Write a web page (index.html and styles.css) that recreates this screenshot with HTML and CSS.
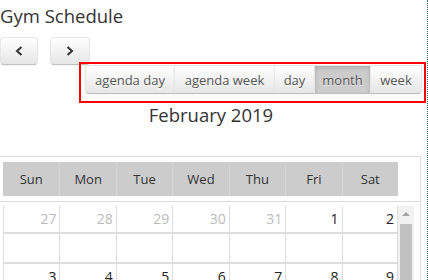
FILE: index.html
```html
<!DOCTYPE html>
<html>
<head>
    <meta charset="UTF-8">
    <title>Gym Schedule</title>
    <link rel="stylesheet" href="styles.css">
</head>
<body>
    <div class="page">
        <h1 class="title">Gym Schedule</h1>
        <div class="nav">
            <button class="btn nav-btn prev">
                <svg width="8" height="10" viewBox="0 0 8 10"><polyline points="6.5,1 2,5 6.5,9" fill="none" stroke="#333" stroke-width="2"/></svg>
            </button>
            <button class="btn nav-btn next">
                <svg width="8" height="10" viewBox="0 0 8 10"><polyline points="1.5,1 6,5 1.5,9" fill="none" stroke="#333" stroke-width="2"/></svg>
            </button>
        </div>
        <div class="views">
            <div class="btn-group">
                <button class="btn view-btn agenda-day">agenda day</button>
                <button class="btn view-btn agenda-week">agenda week</button>
                <button class="btn view-btn day-view">day</button>
                <button class="btn view-btn month-view active">month</button>
                <button class="btn view-btn week-view">week</button>
            </div>
        </div>
        <h2 class="month-title">February 2019</h2>

        <div class="cal">
            <div class="cal-head">
                <div class="dow-row">
                    <div class="dow">Sun</div>
                    <div class="dow">Mon</div>
                    <div class="dow">Tue</div>
                    <div class="dow">Wed</div>
                    <div class="dow">Thu</div>
                    <div class="dow">Fri</div>
                    <div class="dow">Sat</div>
                </div>
            </div>
            <div class="cal-body">
                <div class="weeks">
                    <div class="week">
                        <div class="day-nums">
                            <div class="day other">27</div>
                            <div class="day other">28</div>
                            <div class="day other">29</div>
                            <div class="day other">30</div>
                            <div class="day other">31</div>
                            <div class="day">1</div>
                            <div class="day">2</div>
                        </div>
                        <div class="day-blank">
                            <div class="cell"></div><div class="cell"></div><div class="cell"></div><div class="cell"></div><div class="cell"></div><div class="cell"></div><div class="cell"></div>
                        </div>
                    </div>
                    <div class="week">
                        <div class="day-nums">
                            <div class="day">3</div>
                            <div class="day">4</div>
                            <div class="day">5</div>
                            <div class="day">6</div>
                            <div class="day">7</div>
                            <div class="day">8</div>
                            <div class="day">9</div>
                        </div>
                        <div class="day-blank">
                            <div class="cell"></div><div class="cell"></div><div class="cell"></div><div class="cell"></div><div class="cell"></div><div class="cell"></div><div class="cell"></div>
                        </div>
                    </div>
                </div>
                <div class="scrollbar">
                    <div class="sb-arrow"><span class="sb-tri"></span></div>
                    <div class="sb-thumb"></div>
                </div>
            </div>
        </div>

        <div class="highlight"></div>
    </div>
</body>
</html>
```

FILE: styles.css
```css
* {
    margin: 0;
    padding: 0;
    box-sizing: border-box;
}

body {
    font-family: "Open Sans", Lato, sans-serif;
    background-color: #ffffff;
    color: #333;
}

.page {
    position: relative;
    width: 428px;
    height: 280px;
    padding-right: 5px;
    border-right: 1px dotted #2b6660;
    overflow: hidden;
}

.title {
    padding-top: 5px;
    font-size: 18.5px;
    line-height: 22px;
    font-weight: 400;
    color: #333;
}

.nav {
    display: flex;
    gap: 12px;
    margin-top: 10px;
}

.btn {
    font-family: inherit;
    font-size: 13px;
    color: #555;
    background-color: #f5f5f5;
    background-image: linear-gradient(to bottom, #ffffff, #e6e6e6);
    border: 1px solid #e6e6e6;
    border-bottom-color: #bfbfbf;
    border-radius: 4px;
    text-shadow: 0 1px 1px rgba(255, 255, 255, 0.75);
    box-shadow: inset 0 1px 0 rgba(255, 255, 255, 0.2), 0 1px 2px rgba(0, 0, 0, 0.05);
    cursor: pointer;
}

.nav-btn {
    width: 38px;
    height: 28px;
    display: flex;
    align-items: center;
    justify-content: center;
}

.nav-btn.next {
    width: 40px;
}

.views {
    display: flex;
    justify-content: flex-end;
}

.btn-group {
    display: flex;
}

.view-btn {
    height: 29px;
    padding: 0;
    border-radius: 0;
    margin-left: -1px;
}

.view-btn:first-child {
    margin-left: 0;
    border-radius: 4px 0 0 4px;
}

.view-btn:last-child {
    border-radius: 0 4px 4px 0;
}

.agenda-day { width: 90px; }
.agenda-week { width: 101px; }
.day-view { width: 41px; }
.month-view { width: 57px; }
.week-view { width: 52px; }

.view-btn.active {
    background-color: #cccccc;
    background-image: none;
    box-shadow: inset 0 2px 4px rgba(0, 0, 0, 0.15), 0 1px 2px rgba(0, 0, 0, 0.05);
}

.month-title {
    margin-top: 10px;
    text-align: center;
    font-size: 18.5px;
    line-height: 22px;
    font-weight: 400;
    color: #333;
}

.cal {
    width: 422px;
    margin-left: -1px;
    margin-top: 30px;
    border-top: 1px solid #dddddd;
    border-right: 1px solid #dddddd;
}

.cal-head {
    padding: 5px 6px 5px 4px;
    border-bottom: 1px solid #dddddd;
}

.dow-row {
    display: grid;
    grid-template-columns: repeat(7, 1fr);
    margin-right: 16px;
    background-color: #cccccc;
}

.dow {
    height: 34px;
    line-height: 34px;
    text-align: center;
    font-size: 13px;
    color: #333;
}

.dow + .dow {
    border-left: 1px solid #d6d6d6;
}

.cal-body {
    display: flex;
    padding: 4px 6px 0 4px;
}

.weeks {
    flex: 1;
}

.week + .week {
    border-top: 2px solid #dddddd;
}

.day-nums,
.day-blank {
    display: grid;
    grid-template-columns: repeat(7, 1fr);
}

.day-blank {
    border-top: 2px solid #dddddd;
}

.day,
.cell {
    border-left: 1px solid #dddddd;
}

.day:last-child,
.cell:last-child {
    border-right: 1px solid #dddddd;
}

.day {
    height: 26px;
    padding: 5px 3px 0 0;
    text-align: right;
    font-size: 14px;
    line-height: 16px;
    color: #222;
}

.day.other {
    color: #bbbbbb;
}

.cell {
    height: 28px;
}

.scrollbar {
    width: 16px;
    background-color: #f1f1f1;
}

.sb-arrow {
    height: 16px;
    display: flex;
    align-items: center;
    justify-content: center;
}

.sb-tri {
    width: 0;
    height: 0;
    border-left: 4px solid transparent;
    border-right: 4px solid transparent;
    border-bottom: 4px solid #a3a3a3;
}

.sb-thumb {
    margin: 2px 2px 0;
    height: 100px;
    background-color: #c1c1c1;
}

/* annotation box */
.highlight {
    position: absolute;
    left: 79px;
    top: 62px;
    width: 347px;
    height: 41px;
    border: 2px solid #ff0000;
}
```
